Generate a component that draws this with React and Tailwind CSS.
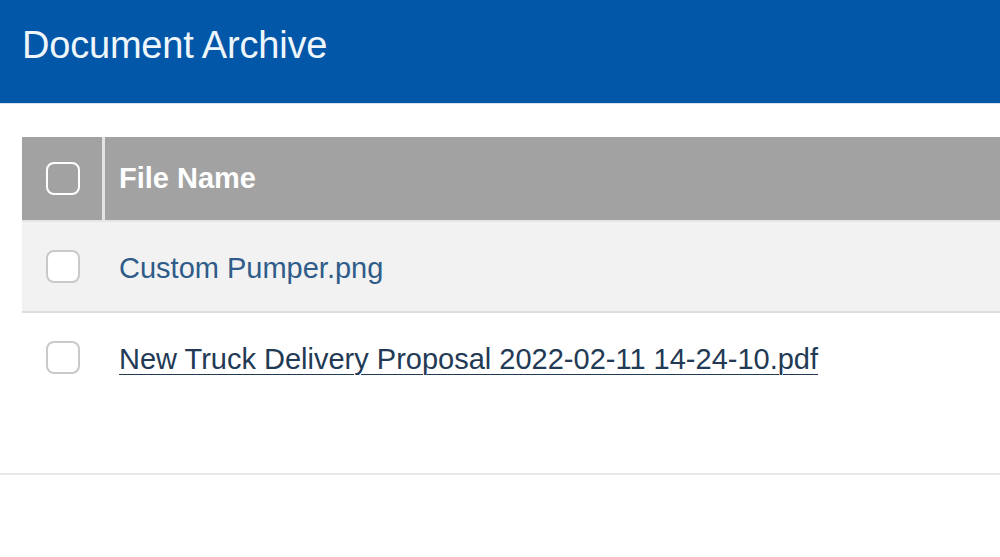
const files = [
  { name: "Custom Pumper.png", shaded: true },
  { name: "New Truck Delivery Proposal 2022-02-11 14-24-10.pdf", underline: true },
];

function Box({ light }) {
  return (
    <span
      className={`block h-[33px] w-[34px] rounded-[8px] border-2 ${
        light ? "border-white" : "border-[#c9c9c9] bg-white"
      }`}
    />
  );
}

export default function App() {
  return (
    <div className="h-[557px] w-[1000px] overflow-hidden bg-white font-['Liberation_Sans',Arial,sans-serif]">
      <header className="flex h-[104px] items-center border-b border-[#d7e3ef] bg-[#0357a8] pl-[22px] pb-[14px]">
        <h1 className="text-[38px] leading-none tracking-[-0.2px] text-[#eef6fb]">Document Archive</h1>
      </header>

      <div className="pl-[22px] pt-[33px]">
        <div className="flex h-[85px] border-b-2 border-[#e6e6e6] bg-[#a2a2a2]">
          <div className="flex w-[80px] items-center pl-[24px]">
            <Box light />
          </div>
          <div className="w-[3px] bg-[#e4e4e4]" />
          <div className="flex items-center pl-[14px] text-[29px] font-bold text-white">File Name</div>
        </div>

        {files.map((f) => (
          <div
            key={f.name}
            className={`flex h-[91px] items-center border-b-2 ${
              f.shaded ? "border-[#dddddd] bg-[#f2f2f2]" : "border-transparent"
            }`}
          >
            <div className="w-[83px] pl-[24px]">
              <Box />
            </div>
            <a
              href="#"
              className={`pl-[14px] pt-[3px] text-[29px] leading-none ${
                f.underline
                  ? "text-[#233a55] underline decoration-1 underline-offset-[5px]"
                  : "text-[#2f5c88]"
              }`}
            >
              {f.name}
            </a>
          </div>
        ))}
      </div>

      <div className="mt-[69px] border-t-2 border-[#e8e8e8]" />
    </div>
  );
}
